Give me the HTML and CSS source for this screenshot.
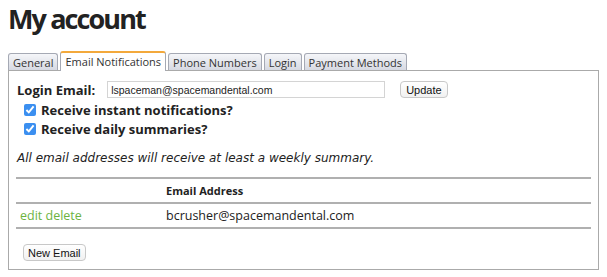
FILE: index.html
```html
<!DOCTYPE html>
<html>

<head>
    <meta charset="utf-8">
    <title>My account</title>
    <link rel="stylesheet" href="styles.css">
</head>

<body>
    <h1 class="page-title">My account</h1>

    <ul class="tabs">
        <li class="tab">General</li>
        <li class="tab active">Email Notifications</li>
        <li class="tab">Phone Numbers</li>
        <li class="tab">Login</li>
        <li class="tab">Payment Methods</li>
    </ul>

    <div class="panel">
        <div class="login-row">
            <label class="login-label">Login Email:</label>
            <input class="login-input" type="text" value="lspaceman@spacemandental.com">
            <button class="btn">Update</button>
        </div>

        <label class="check first"><input type="checkbox" checked> Receive instant notifications?</label>
        <label class="check"><input type="checkbox" checked> Receive daily summaries?</label>

        <p class="note">All email addresses will receive at least a weekly summary.</p>

        <table class="emails">
            <tr>
                <th class="actions"></th>
                <th>Email Address</th>
            </tr>
            <tr>
                <td class="actions"><a href="">edit</a> <a href="">delete</a></td>
                <td>bcrusher@spacemandental.com</td>
            </tr>
        </table>

        <button class="btn btn-new">New Email</button>
    </div>
</body>

</html>
```

FILE: styles.css
```css
body {
    margin: 0;
    padding: 0 8px;
    background: #ffffff;
    color: #222;
    font-family: "Open Sans", sans-serif;
}

.page-title {
    margin: 0;
    height: 37px;
    font-family: "Open Sans", sans-serif;
    font-size: 27px;
    font-weight: 700;
    letter-spacing: -1.9px;
    line-height: 37px;
    color: #222;
}

.tabs {
    display: flex;
    align-items: flex-end;
    margin: 14px 0 0 0;
    padding: 0;
    list-style: none;
    height: 19px;
    position: relative;
    z-index: 1;
}

.tab {
    height: 16px;
    padding: 0 4px;
    margin-right: 2px;
    border: 1px solid #a5a9b4;
    border-bottom: none;
    border-radius: 3px 3px 0 0;
    background: linear-gradient(#f5f6f9, #d6d9e2);
    font-size: 11px;
    line-height: 17px;
    color: #333;
}

.tab.active {
    height: 18px;
    margin-bottom: -1px;
    background: #fff;
    border-top: 2px solid #f3a93c;
    line-height: 18px;
}

.panel {
    height: 200px;
    box-sizing: border-box;
    border: 1px solid #aaa;
    padding: 10px 7px 0 7px;
}

.login-row {
    display: flex;
    align-items: center;
    height: 17px;
}

.login-label {
    margin: 0 12px 0 1px;
    font-size: 13px;
    font-weight: 700;
}

.login-input {
    width: 278px;
    height: 17px;
    box-sizing: border-box;
    margin: 0 15px 0 0;
    padding: 0 3px;
    border: 1px solid #d4d4d4;
    font-family: "Liberation Sans", Arial, sans-serif;
    font-size: 10.5px;
    color: #222;
}

.btn {
    height: 17px;
    padding: 0 5px;
    border: 1px solid #c8c8c8;
    border-radius: 4px;
    background: linear-gradient(#fff, #f1f1f1);
    font-family: "Liberation Sans", Arial, sans-serif;
    font-size: 11px;
    color: #111;
}

.check {
    display: flex;
    align-items: center;
    height: 19px;
    margin-left: 8px;
    font-size: 13px;
    font-weight: 700;
}

.check.first {
    margin-top: 2px;
}

.check input {
    width: 12px;
    height: 12px;
    margin: 0 5px 0 0;
    accent-color: #3b8ff0;
}

.note {
    margin: 12px 0 0 1px;
    font-family: "DejaVu Sans", sans-serif;
    font-size: 12px;
    font-style: italic;
    line-height: 16px;
}

.emails {
    width: 100%;
    margin-top: 11px;
    border-collapse: collapse;
    font-size: 12.5px;
}

.emails tr {
    border-top: 2px solid #b0b0b0;
    border-bottom: 2px solid #b0b0b0;
}

.emails th {
    height: 23px;
    padding: 0;
    text-align: left;
    font-size: 11px;
    font-weight: 700;
}

.emails td {
    height: 23px;
    padding: 0;
}

.emails .actions {
    width: 146px;
    padding-left: 4px;
}

.emails a {
    color: #6cb33f;
    text-decoration: none;
}

.btn-new {
    margin: 15px 0 0 7px;
    padding: 0 4px;
}
```
